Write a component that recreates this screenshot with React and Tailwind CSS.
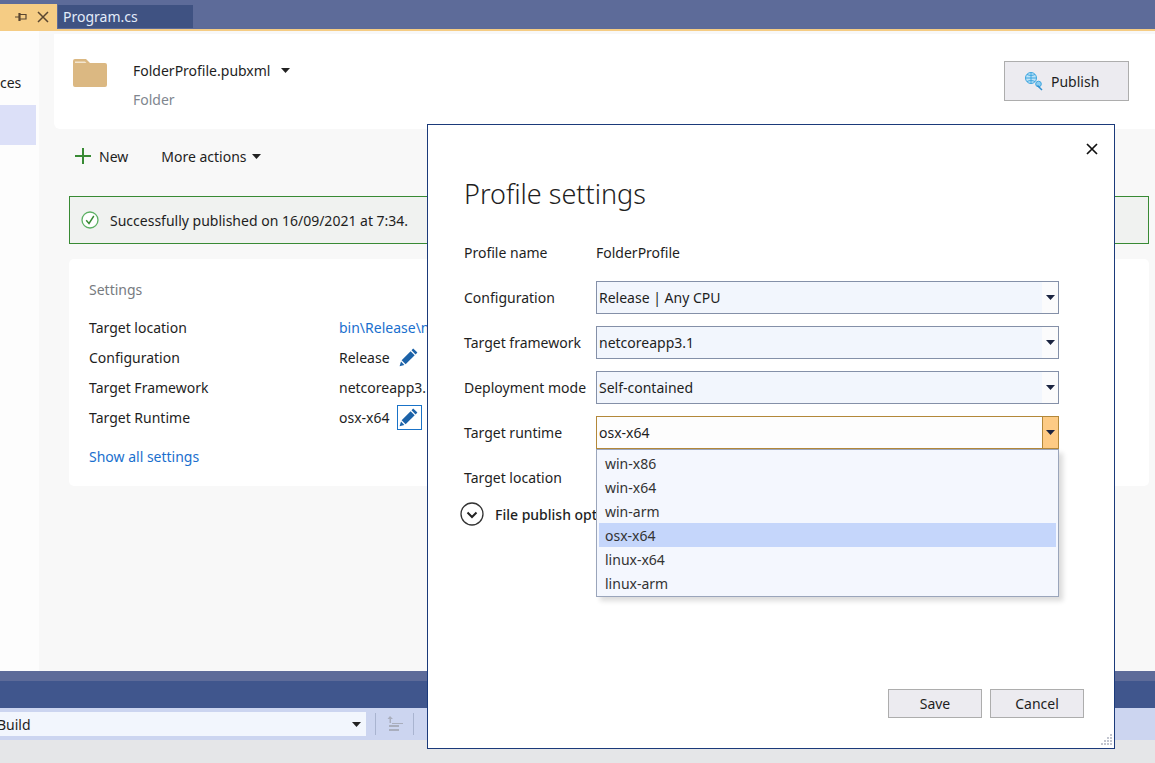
const font = { fontFamily: '"Noto Sans", "Open Sans", sans-serif' }

function Caret({ className = '' }) {
  return (
    <svg width="9" height="5" viewBox="0 0 9 5" className={className} aria-hidden="true">
      <path d="M0 0h9L4.5 5z" fill="currentColor" />
    </svg>
  )
}

function Pencil({ size = 20 }) {
  return (
    <svg width={size} height={size} viewBox="0 0 20 20" aria-hidden="true">
      <path d="M14.2 1.6 18.4 5.6 16.6 7.4 12.5 3.3z" fill="#1c62a8" />
      <path d="M11.6 4.2 15.7 8.3 6.6 17.2 2.6 13.2z" fill="#1c62a8" />
      <path d="M2 14.4 5.4 17.9 0.6 19.3z" fill="#1c62a8" />
    </svg>
  )
}

function ComboBox({ value, focused }) {
  return (
    <div className={`flex h-[33px] flex-1 items-stretch border-[1px] ${focused ? 'border-[#b3883a] bg-[#fdfdfd]' : 'border-[#8490a8] bg-[#f2f6fd]'}`}>
      <div className="flex flex-1 items-center pl-[2px] text-[#1e1e1e]">{value}</div>
      <div className={`flex w-[16px] items-center justify-center ${focused ? 'border-l border-[#b3883a] bg-[#fdcb85]' : 'bg-[#fbfbfc]'}`}>
        <Caret className="text-[#1b2440]" />
      </div>
    </div>
  )
}

function FieldRow({ label, children }) {
  return (
    <div className="flex h-[33px] items-center">
      <div className="w-[132px] shrink-0 text-[#1e1e1e]">{label}</div>
      {children}
    </div>
  )
}

function SettingRow({ label, value, link, edit, focused }) {
  return (
    <div className="flex h-[30px] items-center">
      <div className="w-[250px] shrink-0 text-[#1e1e1e]">{label}</div>
      <div className={link ? 'whitespace-nowrap text-[#1a6fce]' : 'whitespace-nowrap text-[#1e1e1e]'}>{value}</div>
      {edit && (
        <div className={`ml-[7px] flex h-[25px] w-[25px] items-center justify-center ${focused ? 'border border-[#1a73c8]' : ''}`}>
          <Pencil />
        </div>
      )}
    </div>
  )
}

const runtimes = ['win-x86', 'win-x64', 'win-arm', 'osx-x64', 'linux-x64', 'linux-arm']

function ProfileDialog() {
  return (
    <div className="absolute left-[427px] top-[124px] flex h-[625px] w-[688px] flex-col border border-[#1b3a7a] bg-white">
      <div className="flex h-[25px] justify-end pr-[16px] pt-[18px]">
        <svg width="12" height="12" viewBox="0 0 12 12" aria-hidden="true" className="shrink-0">
          <path d="M1 1l10 10M11 1L1 11" stroke="#111" strokeWidth="1.7" />
        </svg>
      </div>
      <h1 className="ml-[36px] mt-[22px] text-[27px] font-light leading-[44px] text-[#1e1e1e]">Profile settings</h1>
      <div className="ml-[36px] mr-[55px] mt-[20px] flex flex-col gap-[12px]">
        <FieldRow label="Profile name"><span className="text-[#1e1e1e]">FolderProfile</span></FieldRow>
        <FieldRow label="Configuration"><ComboBox value="Release | Any CPU" /></FieldRow>
        <FieldRow label="Target framework"><ComboBox value="netcoreapp3.1" /></FieldRow>
        <FieldRow label="Deployment mode"><ComboBox value="Self-contained" /></FieldRow>
        <FieldRow label="Target runtime"><ComboBox value="osx-x64" focused /></FieldRow>
        <FieldRow label="Target location"><span /></FieldRow>
      </div>
      <div className="ml-[32px] mt-[7px] flex h-[26px] items-center gap-[11px]">
        <svg width="24" height="24" viewBox="0 0 24 24" aria-hidden="true">
          <circle cx="12" cy="12" r="11" fill="none" stroke="#333" strokeWidth="1.3" />
          <path d="M7.5 10.5 12 15l4.5-4.5" fill="none" stroke="#222" strokeWidth="2" />
        </svg>
        <span className="font-medium text-[#1e1e1e]">File publish options</span>
      </div>
      <div className="mt-auto mb-[30px] mr-[30px] flex justify-end gap-[8px]">
        <button className="h-[29px] w-[94px] border border-[#adadad] bg-[#ecebf0] text-[#1e1e1e]">Save</button>
        <button className="h-[29px] w-[94px] border border-[#adadad] bg-[#ecebf0] text-[#1e1e1e]">Cancel</button>
      </div>

      <div className="absolute left-[168px] top-[324px] w-[463px] border border-[#9aa5bb] bg-[#f4f7fe] px-[2px] py-[1px] shadow-[4px_4px_5px_rgba(0,0,0,0.14)]">
        {runtimes.map(r => (
          <div key={r} className={`flex h-[24px] items-center pl-[6px] text-[#333] ${r === 'osx-x64' ? 'bg-[#c5d6fb]' : ''}`}>{r}</div>
        ))}
      </div>

      <svg width="14" height="14" viewBox="0 0 14 14" className="absolute bottom-[1px] right-[1px]" aria-hidden="true">
        <g fill="#c3c6d0">
          <path d="M11 1h2v2h-2zM11 4h2v2h-2zM8 4h2v2H8zM11 7h2v2h-2zM8 7h2v2H8zM5 7h2v2H5zM11 10h2v2h-2zM8 10h2v2H8zM5 10h2v2H5zM2 10h2v2H2z" />
        </g>
      </svg>
    </div>
  )
}

export default function App() {
  return (
    <div style={font} className="relative flex h-[763px] w-[1155px] flex-col overflow-hidden bg-[#e5e6e8] text-[14px]">
      <div className="flex h-[29px] shrink-0 items-end bg-[#5d6b99]">
        <div className="flex h-[25px] w-[57px] items-center justify-end gap-[10px] bg-[#f5cc84] pr-[8px]">
          <svg width="12" height="12" viewBox="0 0 12 12" aria-hidden="true">
            <path d="M0 6h4M4 2.5h1v7H4zM5 3.5h6v4.5H5z" fill="none" stroke="#5a4630" strokeWidth="1.2" />
          </svg>
          <svg width="12" height="12" viewBox="0 0 12 12" aria-hidden="true">
            <path d="M1 1l10 10M11 1 1 11" stroke="#5a4630" strokeWidth="1.5" />
          </svg>
        </div>
        <div className="mb-[1px] ml-[1px] flex h-[23px] w-[135px] items-center bg-[#3f5282] pl-[5px] text-[#e3ecfa]">Program.cs</div>
      </div>
      <div className="h-[2px] shrink-0 bg-[#f5cc84]" />

      <div className="flex min-h-0 flex-1 bg-[#f8f8f8]">
        <div className="w-[39px] shrink-0 bg-[#fdfdfd]">
          <div className="mt-[41px] h-[22px] leading-[22px] text-[#1e1e1e]">ces</div>
          <div className="mt-[11px] h-[40px] w-[36px] bg-[#dce0f8]" />
        </div>
        <div className="min-w-0 flex-1">
          <div className="ml-[15px] mt-[3px] flex h-[95px] items-start justify-between rounded-bl-[6px] bg-white">
            <div className="flex">
              <svg width="36" height="30" viewBox="0 0 36 30" className="ml-[18px] mt-[24px]" aria-hidden="true">
                <path d="M1 3a2 2 0 0 1 2-2h11l4 4h15a2 2 0 0 1 2 2v20a2 2 0 0 1-2 2H3a2 2 0 0 1-2-2z" fill="#dbb882" />
                <path d="M3 3.5h10l1.5 1.5H3z" fill="#f3e6d0" />
              </svg>
              <div className="ml-[25px] mt-[24px]">
                <div className="flex h-[24px] items-center text-[#1e1e1e]">
                  FolderProfile.pubxml
                  <Caret className="ml-[11px] text-[#222]" />
                </div>
                <div className="mt-[6px] h-[24px] leading-[24px] text-[#80868f]">Folder</div>
              </div>
            </div>
            <button className="mr-[26px] mt-[27px] flex h-[40px] w-[125px] items-center border border-[#adadad] bg-[#ecebf0] pl-[19px] text-[#1e1e1e]">
              <svg width="20" height="20" viewBox="0 0 20 20" aria-hidden="true">
                <g fill="none" stroke="#3ea6e0" strokeWidth="1">
                  <circle cx="7" cy="7" r="5.5" fill="#bfe3f7" />
                  <path d="M1.5 7h11M7 1.5v11M3 3.5c2.500 1.200 5.500 1.200 8 0M3 10.500c2.500-1.200 5.500-1.200 8 0" />
                </g>
                <circle cx="14.500" cy="13" r="2.800" fill="#8ccdf0" stroke="#3ea6e0" />
                <path d="M13.500 14.500l4.500 4.500" stroke="#2f8fd0" strokeWidth="1.500" />
              </svg>
              <span className="ml-[7px]">Publish</span>
            </button>
          </div>

          <div className="ml-[36px] mt-[15px] flex h-[24px] items-center text-[#1e1e1e]">
            <svg width="16" height="16" viewBox="0 0 16 16" aria-hidden="true">
              <path d="M7 0h2v7h7v2H9v7H7V9H0V7h7z" fill="#388a34" />
            </svg>
            <span className="ml-[8px]">New</span>
            <span className="ml-[33px]">More actions</span>
            <Caret className="ml-[5px] text-[#222]" />
          </div>

          <div className="ml-[30px] mr-[6px] mt-[28px] flex h-[48px] items-center border-[1.5px] border-[#388a34] bg-[#f0f2f0] pl-[11px] text-[#1e1e1e]">
            <svg width="18" height="18" viewBox="0 0 18 18" aria-hidden="true">
              <circle cx="9" cy="9" r="8" fill="#fff" stroke="#5cb063" strokeWidth="1.300" />
              <path d="M5.200 9.200 8 12.500l4.800-7.500" fill="none" stroke="#388a34" strokeWidth="1.400" />
            </svg>
            <span className="ml-[11px]">Successfully published on 16/09/2021 at 7:34.</span>
          </div>

          <div className="ml-[30px] mr-[6px] mt-[15px] h-[227px] rounded-[5px] bg-white px-[20px] pt-[19px]">
            <div className="h-[24px] leading-[24px] text-[#777b80]">Settings</div>
            <div className="mt-[10px]">
              <SettingRow label="Target location" value="bin\Release\netcoreapp3.1\publish\" link />
              <SettingRow label="Configuration" value="Release" edit />
              <SettingRow label="Target Framework" value="netcoreapp3.1" />
              <SettingRow label="Target Runtime" value="osx-x64" edit focused />
            </div>
            <div className="mt-[13px] h-[24px] leading-[24px] text-[#1a6fce]">Show all settings</div>
          </div>
        </div>
      </div>

      <div className="h-[10px] shrink-0 bg-[#5d6b99]" />
      <div className="h-[27px] shrink-0 bg-[#40568d]" />
      <div className="flex h-[32px] shrink-0 items-center bg-[#ccd5f0]">
        <div className="flex h-[24px] w-[366px] items-center justify-between bg-[#f2f6fd] pr-[5px] text-[#1e1e1e]">
          <span className="-ml-[3px]">Build</span>
          <Caret className="text-[#222]" />
        </div>
        <div className="ml-[9px] h-[22px] w-[1px] bg-[#a9b4d0]" />
        <svg width="18" height="18" viewBox="0 0 18 18" className="ml-[10px]" aria-hidden="true">
          <path d="M4 1 1.500 4h2v4h1.500V4H7zM6 8h11v1H6zM3 10h10v2H3zM3 14h10v2H3z" fill="#a9aebd" />
        </svg>
        <div className="ml-[9px] h-[22px] w-[1px] bg-[#a9b4d0]" />
      </div>
      <div className="h-[23px] shrink-0 bg-[#e5e6e8]" />

      <ProfileDialog />
    </div>
  )
}
